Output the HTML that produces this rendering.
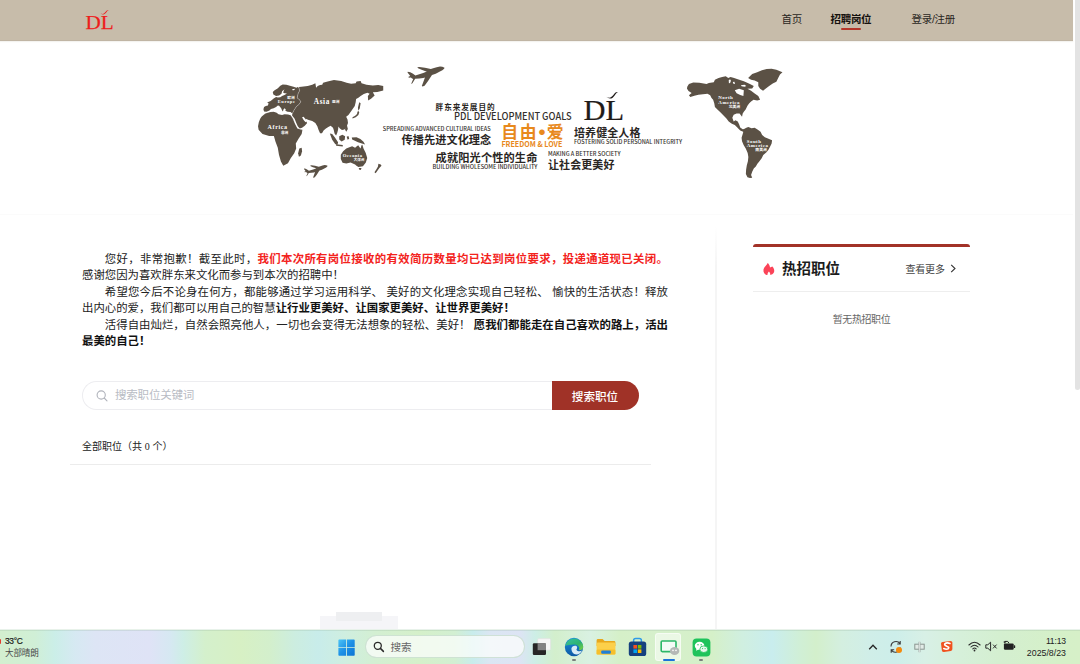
<!DOCTYPE html>
<html lang="zh-CN">
<head>
<meta charset="utf-8">
<title>招聘岗位</title>
<style>
*{box-sizing:border-box;margin:0;padding:0}
html,body{width:1080px;height:664px;overflow:hidden;background:#fff}
body{position:relative;font-family:"Liberation Sans","Noto Sans CJK SC",sans-serif;color:#1a1a1a}
.abs{position:absolute;white-space:nowrap}
/* header */
#hdr{position:absolute;left:0;top:0;width:1073px;height:41px;background:#c7bcaa;border-bottom:1px solid #c0b5a4;box-shadow:0 1px 1px rgba(120,100,70,.08)}
.nav{position:absolute;top:12px;margin-left:.5px;font-size:10.5px;line-height:14px;color:#2a2622;letter-spacing:-0.3px;white-space:nowrap}
.nav.on{font-weight:bold;color:#15110e}
#navline{position:absolute;left:841px;top:28px;width:20px;height:2px;background:#b5362a;border-radius:1px}
/* scrollbar */
#sbar{position:absolute;left:1075px;top:0;width:5px;height:390px;background:#e3e3e3;border-radius:0 0 3px 3px}
/* notice paragraph */
#notice{position:absolute;left:82px;top:251px;width:586px;font-size:11.4px;line-height:16.4px;color:#222}
#notice p{white-space:nowrap}
#notice p.in{text-indent:2em}
#notice p.j{text-align:justify;text-align-last:justify;white-space:normal}
#notice b{color:#111}
#notice .red{color:#f3231d;font-weight:bold}
/* search */
#sbox{position:absolute;left:82px;top:381px;width:480px;height:29px;border:1px solid #ededf0;border-right:none;border-radius:15px 0 0 15px;background:#fff}
#sbox span{position:absolute;left:32px;top:6px;font-size:11.5px;line-height:15px;color:#b9bcc4;letter-spacing:-0.2px}
#sbtn{position:absolute;left:551.5px;top:381px;width:87px;height:29px;background:#a03227;border-radius:0 15px 15px 0;color:#fff;font-size:11.6px;font-weight:500;line-height:31px;text-align:center;padding-right:0}
#allpos{position:absolute;left:82px;top:440px;font-size:10px;line-height:14px;color:#222}
#hr1{position:absolute;left:70px;top:464px;width:581px;height:1px;background:#ececec}
#vr{position:absolute;left:715.4px;top:226px;width:1.6px;height:403px;background:linear-gradient(180deg,rgba(245,245,245,0) 0,#f5f5f5 40px,#f5f5f5 100%)}
#hr0{position:absolute;left:0;top:214px;width:1073px;height:1px;background:#fbfbfb}
/* hot card */
#card{position:absolute;left:753px;top:244px;width:217px;height:100px;border-top:3px solid #a23228;border-radius:3px 3px 0 0}
#cardt{position:absolute;left:782px;top:258.7px;font-size:14.5px;line-height:20px;font-weight:bold;color:#1c1c1c}
#more{position:absolute;left:905.5px;top:262.5px;font-size:10px;line-height:14px;color:#444;letter-spacing:-0.2px}
#hr2{position:absolute;left:753px;top:291px;width:217px;height:1px;background:#eeeeee}
#none{position:absolute;left:753px;top:313px;width:217px;text-align:center;font-size:10px;line-height:14px;color:#666;letter-spacing:-0.4px}
/* ghost */
.ghost{position:absolute;background:#f4f4f6}
/* taskbar */
#tb{position:absolute;left:0;top:629px;width:1080px;height:35px;box-shadow:inset 0 1px 0 #e8f2ea,inset 0 2px 0 rgba(140,175,150,.22);
background:linear-gradient(90deg,#d3efcf 0px,#d0efd6 35px,#cbeee8 55px,#d6e9f2 75px,#dde5f5 95px,#dfe3f6 150px,#d6e8f2 170px,#ceeee6 183px,#d4f0cc 205px,#d7f0c4 240px,#d3efcc 270px,#ccede0 295px,#c8ecea 318px,#cfeee0 345px,#d3efd2 375px,#d5f0ca 420px,#d2efd2 455px,#c8ecec 473px,#dbe6f3 490px,#dde4f4 520px,#cdeee6 535px,#d3efcc 555px,#d9f1e2 590px,#d5f0c8 620px,#d6f0cc 660px,#d5f0c8 712px,#d0efe0 742px,#c9edee 772px,#d0efd6 800px,#d3efcb 816px,#d4efe0 842px,#d0eee8 870px,#cdeeea 895px,#d8f0e6 925px,#d6f0da 960px,#d4efd0 1000px,#d5f0c8 1060px,#d6f0c8 1080px)}
#tb .t{position:absolute;white-space:nowrap;color:#1b1b1b}
</style>
</head>
<body>
<!-- HEADER -->
<div id="hdr">
  <svg class="abs" style="left:84px;top:8px" width="32" height="24" viewBox="0 0 32 24">
    <text x="1.6" y="20.9" font-family="Liberation Serif, serif" font-size="19.6" fill="#ee1c1c" stroke="#ee1c1c" stroke-width=".25" textLength="28.2" lengthAdjust="spacingAndGlyphs">DL</text>
    <path d="M16.6 5.2 Q18.8 7.2 20.9 5.8 Q22.2 4.6 22.9 3.4 Q23.6 2.3 24.9 2 Q23.4 1.8 22.3 3 Q21.2 4.5 20.2 5.3 Q18.7 6.5 16.6 5.2Z" fill="#ee1c1c"/>
  </svg>
  <div class="nav" style="left:781px">首页</div>
  <div class="nav on" style="left:830px">招聘岗位</div>
  <div class="nav" style="left:911px">登录/注册</div>
  <div id="navline"></div>
</div>
<div id="sbar"></div>

<!-- BANNER -->
<div id="banner">
<svg class="abs" style="left:250px;top:60px" width="200" height="130" viewBox="0 0 1022 664">
 <g fill="#5b5145">
  <!-- Europe -->
  <path id="eu" d="M116.3 162.8 L124 155.1 L142.5 144.3 L154.8 132 L167.1 125.2 L185.6 126.5 L204 132 L222.5 136.6 L237.9 141.2 L242.5 138.2 L250.2 141.2 L253.3 156.6 L245.6 172 L241 193.6 L253.3 202.8 L259.4 213.6 L250.2 227.4 L237.9 236.7 L225.6 255.1 L216.3 273.6 L207.1 265.9 L191.7 264.4 L180.9 259.8 L182.5 252.1 L176.3 245.9 L170.2 253.6 L168.6 262.8 L164 258.2 L159.4 245.9 L148.6 233.6 L142.5 232 L133.2 239.7 L120.9 245.9 L107.1 250.5 L99.4 258.2 L84 264.4 L71.7 262.8 L68.6 252.1 L71.7 239.7 L80.9 235.1 L91.7 232 L94.8 221.3 L87.1 216.7 L105.5 209 L120.9 196.7 L133.2 189 L142.5 192 L154.8 190.5 L164 184.3 L176.3 178.2 L188.6 170.5 L170.2 168.9 L171.7 158.2 L176.3 148.9 L164 159.7 L160.9 172 L148.6 181.3 L133.2 184.3 L119.4 176.6Z"/>
  
  <!-- Asia -->
  <path id="as" d="M250 138 L263 137 L295 132.6 L318 125.7 L334 118.8 L336 130 L337.6 142 L346 132.6 L358 128 L369 125.7 L373.6 116.5 L396.7 109.5 L429 102.6 L466 107 L493.7 116.5 L516.8 121 L540 118.8 L544.5 109.5 L565.3 107.2 L570 118.8 L595.4 125.7 L627.7 130.3 L655.4 128 L680.8 132.6 L680.8 155.7 L650.8 164 L627.7 165 L637 181 L618.5 197.3 L603.7 206.5 L602.3 183.4 L611.5 171.9 L600 167.3 L581.5 174.2 L565.3 183.4 L553.8 192.7 L542.2 199.6 L540 216 L535.3 234.3 L516.8 262 L503 280.5 L491.4 289.7 L498.3 303.6 L500.7 322 L493.7 340.5 L482.2 354.4 L470 358 L458 348 L452 340 L450 356 L446 372 L440 386 L432 376 L428 358 L424 346 L412 336 L400 342 L388 350 L376 360 L368 374 L358 374 L350 356 L344 338 L334 322 L318 312 L300 306 L284 300 L286 312 L292 322 L280 336 L266 346 L254 350 L244 338 L236 320 L228 300 L214 282 L216.3 273.6 L225.6 255.1 L237.9 236.7 L250.2 227.4 L259.4 213.6 L253.3 202.8 L241 193.6 L245.6 172 L253.3 156.6 L250.2 141.2Z"/>
  <!-- Africa -->
  <path id="af" d="M59.4 289 L77.8 273.6 L102.5 265.9 L120.9 264.4 L136.3 269 L145.6 276.7 L164 281.3 L176.3 276.7 L194.8 278.2 L207.1 282.8 L213 288 L220 300 L230 326 L242 350 L268 356 L264 378 L248 402 L234 426 L236 452 L226 476 L208 502 L194 528 L170 540 L158 518 L148 484 L142 448 L130 416 L122 388 L98 388 L64 378 L44 356 L41 338 L45 318 L52 300Z"/>
  <!-- Madagascar -->
  <path d="M252 452 L264 448 L266 466 L260 488 L250 494 L246 476Z"/>
  <!-- Japan / Sakhalin -->
  <path d="M558.4 215.8 L565.3 220.4 L560.7 248 L553.8 259.7 L551.5 243.5 L556 225Z M553.8 260 L558.4 266.6 L553.8 280.5 L540 292 L523.8 299 L523.8 292 L537.6 285 L546.9 275.8 L549.2 264.3Z"/>
  <!-- SE Asia islands -->
  <path d="M408 376 L420 378 L434 396 L450 420 L448 430 L436 430 L420 408Z M456 390 L472 382 L486 390 L484 408 L468 416 L456 406Z M440 430 L474 434 L474 442 L440 438Z M486 340 L496 336 L500 352 L492 366 L486 356Z M494 392 L503 388 L507 402 L499 408Z"/>
  <!-- New Guinea -->
  <path d="M520 396 L544 394 L564 404 L580 418 L588 432 L572 426 L552 420 L536 412 L522 406Z"/>
  <!-- Australia -->
  <path id="au" d="M464 484 L476 466 L492 452 L508 446 L522 440 L537 448 L546 440 L553 436 L560 446 L565 452 L570 436 L574 433 L580 452 L591 474 L599 500 L592 524 L577 543 L554 547 L544 540 L537 534 L514 524 L492 529 L473 525 L464 506Z M556 552 L570 552 L566 562 L557 560Z"/>
  <!-- New Zealand -->
  <path d="M656 530 L668 534 L672 540 L662 550 L652 564 L642 578 L636 574 L646 558 L654 544Z"/>
  <!-- plane top -->
  <path d="M994 39 L983 34 L971 33 L954 37 L936 42 L924 46 L894 39 L865 35 L855 37 L859 42 L877 50 L897 57 L904 59 L885 66 L865 73 L845 79 L833 70 L819 62 L806 60 L805 64 L813 74 L819 82 L810 85 L811 90 L822 89 L828 94 L834 97 L826 116 L823 122 L830 119 L840 102 L844 96 L865 95 L885 92 L894 89 L887 108 L878 133 L882 135 L892 131 L909 108 L924 85 L930 77 L949 70 L968 60 L983 52 L992 44Z"/>
  <!-- plane bottom -->
  <path transform="translate(-237.9 515.9) scale(.638)" d="M994 39 L983 34 L971 33 L954 37 L936 42 L924 46 L894 39 L865 35 L855 37 L859 42 L877 50 L897 57 L904 59 L885 66 L865 73 L845 79 L833 70 L819 62 L806 60 L805 64 L813 74 L819 82 L810 85 L811 90 L822 89 L828 94 L834 97 L826 116 L823 122 L830 119 L840 102 L844 96 L865 95 L885 92 L894 89 L887 108 L878 133 L882 135 L892 131 L909 108 L924 85 L930 77 L949 70 L968 60 L983 52 L992 44Z"/>
 </g>
 <!-- continent separators -->
 <path fill="#fff" d="M214.8 148.9 L228.7 146.8 L229.3 151.1 L219.4 155.1Z M266 292 L274 290 L282 300 L290 312 L284 318 L274 306Z"/>
 <g fill="none" stroke="#fff" stroke-width="1.5" stroke-linejoin="round">
  <path d="M250.8 133 L250.2 141.2 L253.3 156.6 L245.6 172 L241 193.6 L253.3 202.8 L259.4 213.6 L250.2 227.4 L237.9 236.7 L225.6 255.1 L216.3 273.6 L212.5 288 L220 300 L226 314 L234 330 L244 346 L256 355 L270 357"/>
  <path d="M57 290 L77 272.4 L102 264.6 L121 263" stroke-width="1.2"/>
 </g>
 <g fill="#fff" font-family="Liberation Serif, serif" font-weight="bold">
  <text x="326" y="223" font-size="37" letter-spacing="3.2">Asia</text>
  <text x="419" y="222" font-size="19" font-family="Noto Sans CJK SC, sans-serif">亚洲</text>
  <text x="142" y="221" font-size="23" letter-spacing="3">Europe</text>
  <text x="190" y="198" font-size="19" font-family="Noto Sans CJK SC, sans-serif">欧洲</text>
  <text x="90" y="353" font-size="31" letter-spacing="3">Africa</text>
  <text x="158" y="376" font-size="19" font-family="Noto Sans CJK SC, sans-serif">非洲</text>
  <text x="474" y="494" font-size="24" letter-spacing="2.4">Oceania</text>
  <text x="530" y="514" font-size="18" font-family="Noto Sans CJK SC, sans-serif">大洋洲</text>
 </g>
</svg>
<svg class="abs" style="left:660px;top:50px" width="160" height="150" viewBox="0 0 708 664">
 <g fill="#5b5145">
  <!-- North America -->
  <path d="M121 162 L128 150 L147 144 L174 145 L206 150 L216 146 L238 143 L243 132 L259 124 L275 119 L291 116 L302 124 L312 119 L328 124 L344 130 L371 138 L398 151 L415 159 L408 170 L387 172 L403 180 L419 193 L435 204 L443 220 L430 223 L414 220 L403 228 L395 236 L387 247 L379 263 L371 273 L366 281 L363 295 L358 289 L352 281 L339 281 L326 287 L320 300 L326 316 L334 311 L344 316 L350 329 L355 343 L366 351 L379 353 L387 359 L376 365 L355 356 L342 343 L331 332 L318 327 L304 316 L294 303 L280 289 L267 276 L254 263 L243 252 L240 236 L235 220 L228 212 L222 200 L210 194 L190 196 L170 198 L152 203 L134 208 L128 200 L140 190 L126 182 L119 170Z"/>
  <!-- Greenland -->
  <path d="M390 124 L408 106 L430 98 L451 90 L472 84 L494 83 L515 87 L542 98 L531 108 L523 124 L515 140 L499 148 L483 159 L467 172 L456 180 L443 172 L435 159 L435 143 L419 135 L403 132Z"/>
  <!-- South America -->
  <path d="M366 353 L382 344 L391 341 L405 346 L419 344 L433 353 L445 362 L452 376 L464 386 L480 393 L496 400 L494 414 L487 428 L480 442 L471 453 L457 465 L450 479 L440 493 L431 504 L424 516 L415 525 L408 539 L403 553 L408 565 L398 567 L387 563 L380 549 L381 530 L384 511 L389 493 L391 474 L388 456 L380 437 L370 421 L363 404 L361 388 L366 372 L370 358Z"/>
 </g>
 <path fill="#fff" d="M331 178 L350 172 L371 178 L369 204 L355 199 L339 191Z M304 134 L310 130 L314 136 L310 146 L305 147Z M358 156 L374 154 L382 159 L374 163 L361 161Z M322 142 L329 140 L332 149 L326 150Z"/>
 <g fill="#fff" font-family="Liberation Serif, serif" font-weight="bold">
  <text x="258" y="217" font-size="22" letter-spacing="2">North</text>
  <text x="258" y="237" font-size="22" letter-spacing="2.2">America</text>
  <text x="304" y="255" font-size="17" font-family="Noto Sans CJK SC, sans-serif">北美洲</text>
  <text x="384" y="410" font-size="22" letter-spacing="2">South</text>
  <text x="384" y="430" font-size="22" letter-spacing="2.2">America</text>
  <text x="422" y="448" font-size="17" font-family="Noto Sans CJK SC, sans-serif">南美洲</text>
 </g>
</svg>
<svg class="abs" style="left:370px;top:80px" width="330" height="110" viewBox="0 0 330 110">
 <g font-family="Liberation Sans, Noto Sans CJK SC, sans-serif" fill="#2a2623">
  <g font-weight="bold">
   <text x="65.6" y="30.3" font-size="7.6" textLength="59" lengthAdjust="spacing">胖东来发展目的</text>
   <text x="31.5" y="64" font-size="11.2" textLength="89.8" lengthAdjust="spacing">传播先进文化理念</text>
   <text x="204" y="57.4" font-size="11" textLength="66.4" lengthAdjust="spacing">培养健全人格</text>
   <text x="65.6" y="81.8" font-size="11.2" textLength="101.8" lengthAdjust="spacing">成就阳光个性的生命</text>
   <text x="178" y="88.6" font-size="11" textLength="66.4" lengthAdjust="spacing">让社会更美好</text>
  </g>
  <text x="84" y="40.2" font-size="10.7" font-family="Noto Sans CJK SC, sans-serif" font-weight="500" fill="#34302d" textLength="117.7" lengthAdjust="spacingAndGlyphs">PDL DEVELOPMENT GOALS</text>
  <g font-size="5.7" fill="#35302c" font-weight="500" font-family="Noto Sans CJK SC, sans-serif">
   <text x="12.8" y="51.3" textLength="107.9" lengthAdjust="spacingAndGlyphs">SPREADING ADVANCED CULTURAL IDEAS</text>
   <text x="204" y="64.1" textLength="108" lengthAdjust="spacingAndGlyphs">FOSTERING SOLID PERSONAL INTEGRITY</text>
   <text x="62.6" y="89.2" textLength="104.8" lengthAdjust="spacingAndGlyphs">BUILDING WHOLESOME INDIVIDUALITY</text>
   <text x="178" y="75.8" textLength="72.5" lengthAdjust="spacingAndGlyphs">MAKING A BETTER SOCIETY</text>
  </g>
  <g fill="#e8891c" font-weight="bold">
   <text y="57.6" font-size="16.8" font-weight="700" font-family="Noto Sans CJK SC, sans-serif"><tspan x="131.2">自</tspan><tspan x="149.8">由</tspan><tspan x="160.9" y="59.8" font-size="22">·</tspan><tspan x="176.8" y="57.6">爱</tspan></text>
   <text x="131.4" y="66.8" font-size="7.6" font-family="Noto Sans CJK SC, sans-serif" textLength="61" lengthAdjust="spacingAndGlyphs">FREEDOM &amp; LOVE</text>
  </g>
  <text x="213.4" y="40" font-family="Liberation Serif, serif" font-size="29" textLength="40.6" lengthAdjust="spacingAndGlyphs" fill="#1f1b19" stroke="#1f1b19" stroke-width="0.2">DL</text>
  <path d="M236.2 16.8 Q239.5 19.9 242.7 17.7 Q244.7 15.9 245.7 14 Q246.7 12.4 248 12 Q246 11.7 244.5 13.4 Q242.9 15.6 241.5 16.8 Q239.4 18.5 236.2 16.8Z" fill="#1f1b19"/>
 </g>
</svg>
</div>

<!-- NOTICE -->
<div id="notice">
<p class="j in">您好，非常抱歉！截至此时，<span class="red">我们本次所有岗位接收的有效简历数量均已达到岗位要求，投递通道现已关闭。</span></p>
<p>感谢您因为喜欢胖东来文化而参与到本次的招聘中！</p>
<p class="j in">希望您今后不论身在何方，都能够通过学习运用科学、 美好的文化理念实现自己轻松、 愉快的生活状态！释放</p>
<p>出内心的爱，我们都可以用自己的智慧<b>让行业更美好、让国家更美好、让世界更美好！</b></p>
<p class="j in">活得自由灿烂，自然会照亮他人，一切也会变得无法想象的轻松、美好！ <b>愿我们都能走在自己喜欢的路上，活出</b></p>
<p><b>最美的自己！</b></p>
</div>

<!-- SEARCH -->
<div id="sbox">
  <svg class="abs" style="left:13px;top:8px" width="12" height="12" viewBox="0 0 12 12"><circle cx="5.2" cy="5" r="4.1" fill="none" stroke="#b0b3bb" stroke-width="1.1"/><path d="M8.2 8 L11 10.8" stroke="#b0b3bb" stroke-width="1.1" stroke-linecap="round"/></svg>
  <span>搜索职位关键词</span>
</div>
<div id="sbtn">搜索职位</div>
<div id="allpos">全部职位（共 <span style="font-family:'Liberation Serif',serif">0</span> 个）</div>
<div id="hr1"></div>
<div id="vr"></div><div id="hr0"></div>

<!-- HOT CARD -->
<div id="card"></div>
<svg class="abs" style="left:762px;top:262px" width="14" height="14" viewBox="0 0 14 14"><path d="M5.6 1 C6.9 2 7.9 3.6 8 5.6 C8.7 5.4 9.6 4.9 10.4 4.5 C11.9 6.2 12.7 8.2 12.1 10.1 C11.4 12.1 9.6 13.1 7.4 13.1 L6.2 13.1 C3.8 13.1 2 11.7 1.5 9.4 C1.1 7 2.5 5 4 3.6 C4.8 2.8 5.4 2 5.6 1Z" fill="#fb4358"/><path d="M6.9 9.5 C7.8 10.4 8.5 11.5 8.2 13.2 L5.5 13.2 C5.2 11.7 6 10.5 6.9 9.5Z" fill="#fff"/></svg>
<div id="cardt" class="abs">热招职位</div>
<div id="more" class="abs">查看更多</div>
<svg class="abs" style="left:949px;top:263px" width="8" height="11" viewBox="0 0 8 11"><path d="M2.2 1.8 L6 5.5 L2.2 9.2" fill="none" stroke="#333" stroke-width="1.1"/></svg>
<div id="hr2"></div>
<div id="none">暂无热招职位</div>

<!-- ghost shapes above taskbar -->
<div class="ghost" style="left:320px;top:616px;width:78px;height:14px;background:#f5f5f8"></div>
<div class="ghost" style="left:336px;top:612px;width:46px;height:9px;background:#eeeff1"></div>

<!-- TASKBAR -->
<div id="tb">
  <!-- weather -->
  <div class="abs" style="left:0;top:9.5px;width:1.2px;height:5px;background:#e23b2e;border-radius:0 2px 2px 0"></div>
  <div class="t" style="left:5px;top:7.4px;font-size:8.4px;line-height:11px;color:#1a1a1a;letter-spacing:-0.3px;-webkit-text-stroke:0.2px #1a1a1a">33°C</div>
  <div class="t" style="left:5px;top:18.6px;font-size:8.6px;line-height:11px;color:#4a4a4a;letter-spacing:-0.2px">大部晴朗</div>
  <!-- start -->
  <svg class="abs" style="left:338px;top:10px" width="17.2" height="17.2" viewBox="0 0 17.2 18"><defs><linearGradient id="wg" x1="0" y1="0" x2="1" y2="1"><stop offset="0" stop-color="#4cc4f6"/><stop offset=".5" stop-color="#1c90e6"/><stop offset="1" stop-color="#0b74d4"/></linearGradient></defs><g fill="url(#wg)"><path d="M0 1.2 Q0 0.4 .8 .4 L8.1 .4 L8.1 8.6 L0 8.6Z M9 .4 L16.3 .4 Q17.1 .4 17.1 1.2 L17.1 8.6 L9 8.6Z M0 9.5 L8.1 9.5 L8.1 17.6 L.8 17.6 Q0 17.6 0 16.8Z M9 9.5 L17.1 9.5 L17.1 16.8 Q17.1 17.6 16.3 17.6 L9 17.6Z"/></g></svg>
  <!-- search pill -->
  <div class="abs" style="left:365px;top:6px;width:159.5px;height:23px;border-radius:11.5px;background:rgba(252,253,252,.74);border:1px solid rgba(176,206,186,.55)"></div>
  <svg class="abs" style="left:373px;top:12px" width="12" height="12" viewBox="0 0 12 12"><circle cx="4.8" cy="4.8" r="3.5" fill="none" stroke="#2b2b2b" stroke-width="1.3"/><path d="M7.4 7.4 L10.4 10.4" stroke="#2b2b2b" stroke-width="1.5" stroke-linecap="round"/></svg>
  <div class="t" style="left:390.5px;top:10.5px;font-size:10.6px;line-height:14px;color:#666">搜索</div>
  <!-- task view -->
  <svg class="abs" style="left:532px;top:9px" width="20" height="19" viewBox="0 0 20 19"><rect x="5.6" y="0.6" width="13" height="11.6" rx="1.2" fill="#f5f5f5" stroke="#dcdcdc" stroke-width=".5"/><rect x="0.8" y="5.2" width="13.2" height="11.8" rx="1.2" fill="#262626"/><rect x="5.6" y="5.2" width="8.4" height="7" fill="#9a9a9a" opacity=".8"/></svg>
  <!-- edge -->
  <svg class="abs" style="left:564px;top:8px" width="20" height="20" viewBox="0 0 20 20"><defs><linearGradient id="eg1" x1="0" y1="0" x2="1" y2="1"><stop offset="0" stop-color="#35c1a5"/><stop offset=".6" stop-color="#2fb36d"/><stop offset="1" stop-color="#7fd23f"/></linearGradient><linearGradient id="eg2" x1="0" y1="0" x2="0" y2="1"><stop offset="0" stop-color="#1b8fdb"/><stop offset="1" stop-color="#0c59a4"/></linearGradient></defs><circle cx="10" cy="10" r="9.2" fill="url(#eg2)"/><path d="M1.2 8.2 A9.2 9.2 0 0 1 19.2 9.6 C19.4 12.4 17 13.6 14.8 13 C16 11.6 15.2 8.4 11.2 7.6 C6.8 6.8 3 9 1.2 8.2Z" fill="url(#eg1)"/><path d="M7.4 11.6 C7.6 9.4 10 8.2 12 8.8 C13.6 9.4 13.4 11.6 12.4 12.4 C13.4 15 16.6 14.6 18 13.6 C16 18.6 9.6 18.6 8 14.6 C7.6 13.6 7.4 12.6 7.4 11.6Z" fill="#e8f6fb" opacity=".92"/></svg>
  <div class="abs" style="left:572px;top:30px;width:4px;height:1.6px;border-radius:1px;background:#7a7f7c"></div>
  <!-- explorer -->
  <svg class="abs" style="left:596px;top:9px" width="20" height="18" viewBox="0 0 20 18"><path d="M0.6 2.4 Q0.6 1 2 1 L6.6 1 L8.6 3 L18 3 Q19.4 3 19.4 4.4 L19.4 8 L0.6 8Z" fill="#e8a81c"/><rect x="0.6" y="4.6" width="18.8" height="12" rx="1.4" fill="#fcd04a"/><rect x="0.6" y="11.6" width="18.8" height="5" rx="1.2" fill="#f6bf2c"/><rect x="5.2" y="12.6" width="9.6" height="3.2" rx="1" fill="#1f7fd6"/></svg>
  <!-- store -->
  <svg class="abs" style="left:628px;top:8px" width="19" height="20" viewBox="0 0 19 20"><path d="M5.6 5 L5.6 3.4 Q5.6 1.4 7.6 1.4 L11.4 1.4 Q13.4 1.4 13.4 3.4 L13.4 5" fill="none" stroke="#2f9be8" stroke-width="1.5"/><rect x="0.8" y="4.6" width="17.4" height="14.4" rx="2.6" fill="#15417e"/><rect x="5.4" y="8" width="3.6" height="3.6" fill="#f25022"/><rect x="9.8" y="8" width="3.6" height="3.6" fill="#7fba00"/><rect x="5.4" y="12.4" width="3.6" height="3.6" fill="#00a4ef"/><rect x="9.8" y="12.4" width="3.6" height="3.6" fill="#ffb900"/></svg>
  <!-- active app -->
  <div class="abs" style="left:655px;top:4px;width:25.6px;height:28px;border-radius:3px;background:rgba(255,255,255,.5);border:1px solid rgba(255,255,255,.55)"></div>
  <svg class="abs" style="left:660px;top:10.5px" width="20" height="17" viewBox="0 0 20 17"><rect x="1.2" y="1" width="14.8" height="10.6" rx="1" fill="#f4fbf6" stroke="#2cb768" stroke-width="1.6"/><ellipse cx="14.6" cy="11" rx="4.7" ry="4" fill="#b4b8b6"/><circle cx="13" cy="10.4" r=".8" fill="#fff"/><circle cx="16" cy="10.4" r=".8" fill="#fff"/></svg>
  <div class="abs" style="left:663.4px;top:29.6px;width:11.6px;height:2px;border-radius:1px;background:#1a73d9"></div>
  <!-- wechat -->
  <svg class="abs" style="left:692px;top:8.5px" width="19" height="19" viewBox="0 0 19 19"><rect x="0.6" y="0.6" width="17.8" height="17.8" rx="4" fill="#1fc35b"/><ellipse cx="7.6" cy="7.8" rx="4.8" ry="4" fill="#fff"/><path d="M4.6 10.6 L4 12.8 L6.6 11.4Z" fill="#fff"/><ellipse cx="11.8" cy="11.2" rx="4" ry="3.3" fill="#e9f8ee" stroke="#1fc35b" stroke-width=".8"/><circle cx="6" cy="6.8" r=".7" fill="#1fc35b"/><circle cx="9.2" cy="6.8" r=".7" fill="#1fc35b"/><circle cx="10.6" cy="10.6" r=".55" fill="#1fc35b"/><circle cx="13.1" cy="10.6" r=".55" fill="#1fc35b"/></svg>
  <div class="abs" style="left:699px;top:30px;width:4px;height:1.6px;border-radius:1px;background:#7a7f7c"></div>
  <!-- tray -->
  <svg class="abs" style="left:868px;top:14px" width="10" height="8" viewBox="0 0 10 8"><path d="M1.2 6.2 L5 2.2 L8.8 6.2" fill="none" stroke="#262626" stroke-width="1.3"/></svg>
  <svg class="abs" style="left:889px;top:11px" width="15" height="14" viewBox="0 0 15 14"><path d="M2 6.4 A5 5 0 0 1 11 3.6 M11.2 1 L11.2 4 L8.2 4" fill="none" stroke="#3a3a3a" stroke-width="1.1"/><path d="M11.4 7.6 A5 5 0 0 1 2.4 10.2 M2.2 12.8 L2.2 9.8 L5.2 9.8" fill="none" stroke="#3a3a3a" stroke-width="1.1"/><circle cx="10" cy="10" r="3" fill="#f58a0b"/></svg>
  <svg class="abs" style="left:914px;top:12px" width="11" height="12" viewBox="0 0 11 12"><rect x="0.8" y="3.2" width="9.4" height="5" fill="#e2ebe7" stroke="#8b9691" stroke-width="1"/><path d="M5.5 0.8 L5.5 11.2" stroke="#a3aca8" stroke-width="2"/><path d="M5.5 0.8 L5.5 11.2" stroke="#e9efec" stroke-width=".7"/></svg>
  <svg class="abs" style="left:940px;top:11px" width="14" height="13" viewBox="0 0 14 13"><path d="M2.6 2 L10.6 1 Q12.4 1 12.4 2.6 L12.4 9 Q12.4 10.6 10.8 10.9 L4 12 Q2.2 12.1 1.9 10.5 L1 3.8 Q0.9 2.3 2.6 2Z" fill="#f0521f"/><path d="M10 3.4 Q6.8 2.2 5 3.6 Q3.8 5 6.8 6.2 Q9.6 7.2 8.4 8.6 Q6.6 9.8 3.8 8.6" fill="none" stroke="#fff" stroke-width="1.6" stroke-linecap="round"/></svg>
  <svg class="abs" style="left:968px;top:12px" width="13" height="11" viewBox="0 0 13 11"><g fill="none" stroke="#2a2a2a" stroke-width="1.05" stroke-linecap="round"><path d="M0.9 4 Q6.5 -1.4 12.1 4"/><path d="M2.9 6 Q6.5 2.4 10.1 6"/><path d="M4.8 7.9 Q6.5 6.2 8.2 7.9"/></g><circle cx="6.5" cy="9.5" r=".9" fill="#2a2a2a"/></svg>
  <svg class="abs" style="left:985px;top:12px" width="13" height="11" viewBox="0 0 13 11"><path d="M0.8 3.8 L2.8 3.8 L5.6 1.2 L5.6 9.8 L2.8 7.2 L0.8 7.2Z" fill="none" stroke="#2a2a2a" stroke-width="1" stroke-linejoin="round"/><path d="M8 3.6 L11.6 7.4 M11.6 3.6 L8 7.4" stroke="#2a2a2a" stroke-width="1"/></svg>
  <svg class="abs" style="left:1003px;top:11px" width="13" height="12" viewBox="0 0 13 12"><rect x="0.9" y="3.4" width="9.8" height="6.4" rx="1.2" fill="#222"/><rect x="10.9" y="5.2" width="1.3" height="2.8" rx=".5" fill="#222"/><path d="M1.8 3.4 L1.8 1.4 L4.6 1.4 L6 3.2" fill="none" stroke="#222" stroke-width="1"/><path d="M0.6 2 L2.8 2" stroke="#222" stroke-width=".9"/></svg>
  <div class="t" style="right:14px;top:6.5px;font-size:8.6px;line-height:11px;color:#222;text-align:right;letter-spacing:-0.15px">11:13</div>
  <div class="t" style="right:14px;top:18.6px;font-size:8.8px;line-height:11px;color:#222;text-align:right;letter-spacing:0">2025/8/23</div>
</div>
</body>
</html>
